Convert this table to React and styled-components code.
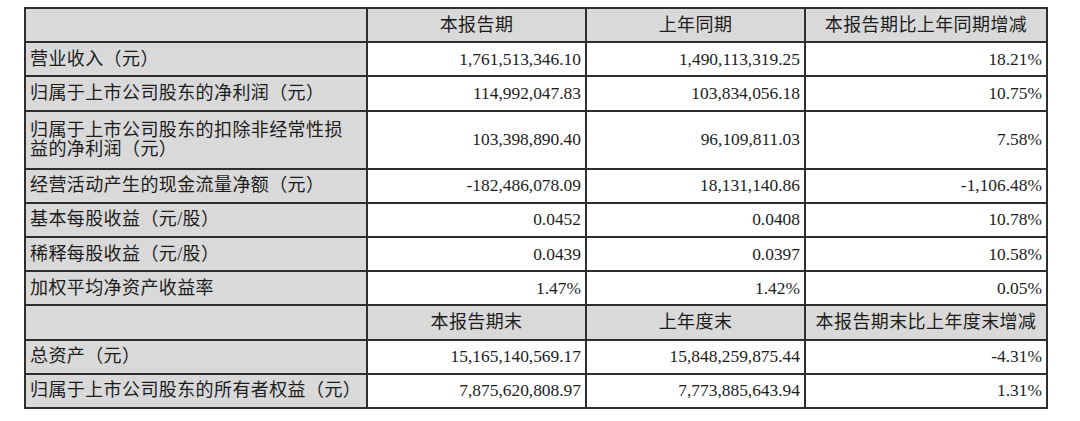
import React from "react";
import styled, { createGlobalStyle } from "styled-components";

const GlobalStyle = createGlobalStyle`
  html, body {
    margin: 0;
    padding: 0;
    background: #ffffff;
  }
`;

const Page = styled.div`
  width: 1080px;
  height: 421px;
  box-sizing: border-box;
  padding: 7px 0 0 24px;
  background: #ffffff;
`;

const Table = styled.table`
  width: 1022px;
  table-layout: fixed;
  border-collapse: collapse;
  font-family: "Liberation Serif", "Noto Sans CJK SC", serif;
  color: #1c1c1c;
`;

const Row = styled.tr`
  height: ${(p) => (p.$tall ? "58px" : "34.2px")};
`;

const Cell = styled.td`
  border: 2px solid #2e2e2e;
  padding: 0 4px;
  background: ${(p) => (p.$shaded ? "#d9d9d9" : "#ffffff")};
  text-align: ${(p) => p.$align || "right"};
  vertical-align: middle;
  font-size: ${(p) => (p.$cjk ? "18px" : "17.4px")};
  letter-spacing: ${(p) => (p.$cjk ? "0.4px" : "0")};
  line-height: 19px;
  white-space: nowrap;
  overflow: hidden;
`;

const Line = styled.span`
  display: block;
`;

const periodRows = [
  [["营业收入（元）"], "1,761,513,346.10", "1,490,113,319.25", "18.21%"],
  [["归属于上市公司股东的净利润（元）"], "114,992,047.83", "103,834,056.18", "10.75%"],
  [
    ["归属于上市公司股东的扣除非经常性损", "益的净利润（元）"],
    "103,398,890.40",
    "96,109,811.03",
    "7.58%",
  ],
  [["经营活动产生的现金流量净额（元）"], "-182,486,078.09", "18,131,140.86", "-1,106.48%"],
  [["基本每股收益（元/股）"], "0.0452", "0.0408", "10.78%"],
  [["稀释每股收益（元/股）"], "0.0439", "0.0397", "10.58%"],
  [["加权平均净资产收益率"], "1.47%", "1.42%", "0.05%"],
];

const balanceRows = [
  [["总资产（元）"], "15,165,140,569.17", "15,848,259,875.44", "-4.31%"],
  [["归属于上市公司股东的所有者权益（元）"], "7,875,620,808.97", "7,773,885,643.94", "1.31%"],
];

const HeaderRow = ({ titles }) => (
  <Row>
    <Cell $shaded $cjk $align="center" />
    {titles.map((t) => (
      <Cell key={t} $shaded $cjk $align="center">
        {t}
      </Cell>
    ))}
  </Row>
);

const DataRow = ({ lines, values }) => (
  <Row $tall={lines.length > 1}>
    <Cell $shaded $cjk $align="left">
      {lines.map((l) => (
        <Line key={l}>{l}</Line>
      ))}
    </Cell>
    {values.map((v, i) => (
      <Cell key={i}>{v}</Cell>
    ))}
  </Row>
);

export default function App() {
  return (
    <Page>
      <GlobalStyle />
      <Table>
        <colgroup>
          <col style={{ width: 342 }} />
          <col style={{ width: 219 }} />
          <col style={{ width: 219 }} />
          <col style={{ width: 242 }} />
        </colgroup>
        <tbody>
          <HeaderRow titles={["本报告期", "上年同期", "本报告期比上年同期增减"]} />
          {periodRows.map(([lines, a, b, c]) => (
            <DataRow key={lines[0]} lines={lines} values={[a, b, c]} />
          ))}
          <HeaderRow titles={["本报告期末", "上年度末", "本报告期末比上年度末增减"]} />
          {balanceRows.map(([lines, a, b, c]) => (
            <DataRow key={lines[0]} lines={lines} values={[a, b, c]} />
          ))}
        </tbody>
      </Table>
    </Page>
  );
}
